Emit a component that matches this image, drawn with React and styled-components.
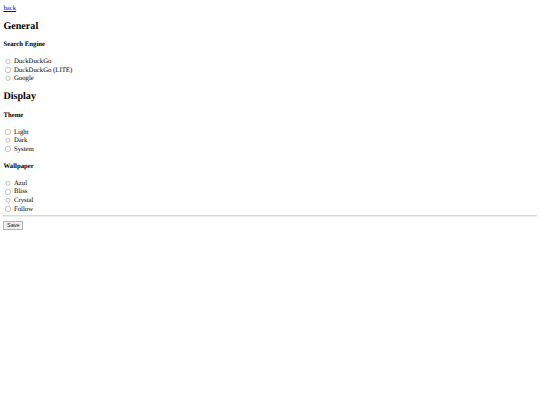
import React, { useState } from "react";
import styled, { createGlobalStyle } from "styled-components";

const GlobalStyle = createGlobalStyle`
  html, body {
    margin: 0;
    padding: 0;
    background: #fff;
  }
`;

// the page is a plain settings form, shown at a reduced zoom
const Page = styled.form`
  zoom: 0.4219;
  padding: 12.5px 8px 8px;
  font-family: "Liberation Serif", "Times New Roman", serif;
  font-size: 16px;
  color: #000;
  text-rendering: geometricPrecision;
`;

const BackLink = styled.a`
  color: #0000ee;
  text-decoration: underline;
  display: block;
`;

const SectionTitle = styled.h2`
  font-size: 24px;
  font-weight: bold;
  margin: 19.92px 0 22px;
`;

const GroupTitle = styled.h4`
  font-size: 16px;
  font-weight: bold;
  margin: 22.5px 0 21.5px;
`;

const Options = styled.div`
  display: flex;
  flex-direction: column;
`;

const Option = styled.label`
  display: flex;
  align-items: center;
  height: 20.3px;
  gap: 4px;
`;

const Radio = styled.input`
  margin: 0 3px 0 5px;
  width: 13px;
  height: 13px;
`;

const Rule = styled.hr`
  margin: 3px 0 10px;
  border: none;
  border-top: 2px solid #d8d8d8;
  border-bottom: 2px solid #ececec;
`;

const SaveButton = styled.button`
  font-family: Arial, "Liberation Sans", sans-serif;
  font-size: 13.33px;
  padding: 1px 6px;
  border: 2px solid #b5b5b5;
  border-radius: 2px;
  background: #efefef;
  color: #222;
`;

const RadioGroup = ({ name, options, value, onChange }) => (
  <Options>
    {options.map((o) => (
      <Option key={o}>
        <Radio
          type="radio"
          name={name}
          checked={value === o}
          onChange={() => onChange(o)}
        />
        {o}
      </Option>
    ))}
  </Options>
);

const App = () => {
  const [engine, setEngine] = useState(null);
  const [theme, setTheme] = useState(null);
  const [wallpaper, setWallpaper] = useState(null);

  return (
    <>
      <GlobalStyle />
      <Page onSubmit={(e) => e.preventDefault()}>
        <BackLink href="#back">back</BackLink>
        <SectionTitle>General</SectionTitle>
        <GroupTitle>Search Engine</GroupTitle>
        <RadioGroup
          name="engine"
          options={["DuckDuckGo", "DuckDuckGo (LITE)", "Google"]}
          value={engine}
          onChange={setEngine}
        />
        <SectionTitle>Display</SectionTitle>
        <GroupTitle>Theme</GroupTitle>
        <RadioGroup
          name="theme"
          options={["Light", "Dark", "System"]}
          value={theme}
          onChange={setTheme}
        />
        <GroupTitle>Wallpaper</GroupTitle>
        <RadioGroup
          name="wallpaper"
          options={["Azul", "Bliss", "Crystal", "Follow"]}
          value={wallpaper}
          onChange={setWallpaper}
        />
        <Rule />
        <SaveButton type="submit">Save</SaveButton>
      </Page>
    </>
  );
};

export default App;
